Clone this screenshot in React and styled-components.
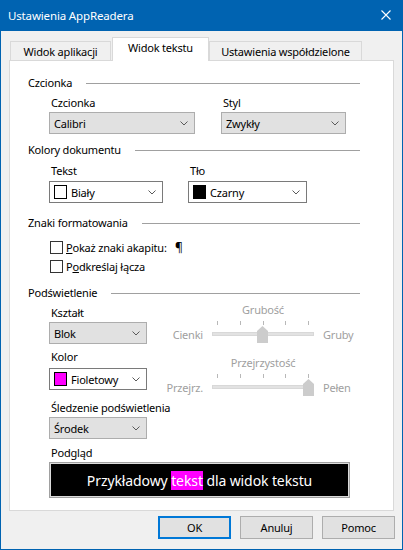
import React from 'react';
import styled, { createGlobalStyle } from 'styled-components';

const Global = createGlobalStyle`
  html, body { margin: 0; padding: 0; background: #f0f0f0; }
  body {
    font-family: "Noto Sans", "Open Sans", sans-serif;
    font-size: 11px;
    letter-spacing: -0.2px;
    color: #000;
  }
  * { box-sizing: border-box; }
`;

const Window = styled.div`
  width: 403px;
  height: 550px;
  border: 1px solid #0063b1;
  border-top: none;
  display: flex;
  flex-direction: column;
  background: #f0f0f0;
`;

const TitleBar = styled.div`
  height: 31px;
  flex: none;
  background: #0063b1;
  color: #fff;
  display: flex;
  align-items: center;
  justify-content: space-between;
  padding: 0 11px 1px 7px;
  font-size: 11.5px;
  letter-spacing: -0.15px;
`;

const Body = styled.div`
  flex: 1;
  display: flex;
  flex-direction: column;
  padding: 6px 8px 0 8px;
`;

const TabRow = styled.div`
  height: 23px;
  display: flex;
  align-items: flex-end;
  padding-left: 1px;
  position: relative;
  z-index: 1;
`;

const Tab = styled.div`
  width: ${p => p.$w}px;
  margin-left: ${p => p.$ml || 0}px;
  height: ${p => (p.$active ? 24 : 19)}px;
  margin-bottom: ${p => (p.$active ? -1 : 0)}px;
  background: ${p => (p.$active ? '#fff' : '#f0f0f0')};
  border: 1px solid #d9d9d9;
  border-bottom: none;
  display: flex;
  align-items: center;
  justify-content: center;
  padding-bottom: ${p => (p.$active ? 4 : 0)}px;
  white-space: nowrap;
`;

const Panel = styled.div`
  height: 451px;
  flex: none;
  background: #fff;
  border: 1px solid #d9d9d9;
  padding: 14px 33px 0 18px;
  display: flex;
  flex-direction: column;
`;

const GroupHeader = styled.div`
  display: flex;
  align-items: center;
  height: 16px;
  line-height: 16px;
  margin-top: ${p => p.$mt || 0}px;
  white-space: nowrap;
`;

const GroupLine = styled.span`
  flex: 1;
  height: 1px;
  background: #a0a0a0;
  margin-left: 14px;
`;

const FieldRow = styled.div`
  display: grid;
  grid-template-columns: ${p => p.$first}px auto;
  padding-left: 21px;
  margin-top: ${p => p.$mt || 0}px;
`;

const Field = styled.div`
  display: flex;
  flex-direction: column;
  align-items: flex-start;
`;

const Label = styled.div`
  height: 16px;
  line-height: 16px;
  white-space: nowrap;
  margin-top: ${p => p.$mt || 0}px;
  margin-left: ${p => p.$ml || 0}px;
  padding-left: 2px;
`;

const ComboBox = styled.div`
  width: ${p => p.$w}px;
  height: 22px;
  flex: none;
  display: flex;
  align-items: center;
  padding: 0 6px 0 4px;
  margin-top: ${p => p.$mt || 0}px;
  background: ${p => (p.$flat ? '#e1e1e1' : '#fff')};
  border: 1px solid ${p => (p.$flat ? '#adadad' : '#7a7a7a')};
`;

const ComboText = styled.span`
  flex: 1;
  white-space: nowrap;
  padding-top: 1px;
`;

const Swatch = styled.span`
  width: 13px;
  height: 14px;
  flex: none;
  border: 1px solid #000;
  background: ${p => p.$c};
  margin-right: 4px;
`;

const Chevron = () => (
  <svg width="8" height="5" viewBox="0 0 8 5" style={{ flex: 'none' }}>
    <path d="M0.5 0.5 L4 4 L7.5 0.5" fill="none" stroke="#5a5a5a" strokeWidth="1" />
  </svg>
);

const Combo = ({ w, flat, mt, swatch, children }) => (
  <ComboBox $w={w} $flat={flat} $mt={mt}>
    {swatch && <Swatch $c={swatch} />}
    <ComboText>{children}</ComboText>
    <Chevron />
  </ComboBox>
);

const CheckRow = styled.label`
  display: flex;
  align-items: center;
  height: 16px;
  margin-left: 22px;
  margin-top: ${p => p.$mt || 0}px;
  white-space: nowrap;
`;

const CheckBox = styled.span`
  width: 13px;
  height: 13px;
  flex: none;
  border: 1px solid #333;
  background: #fff;
  margin-right: 3px;
`;

const CheckText = styled.span`
  width: ${p => (p.$w ? `${p.$w}px` : 'auto')};
`;

const Pilcrow = styled.span`
  font-size: 12px;
`;

const HlRow = styled.div`
  display: flex;
  padding-left: 21px;
`;

const LeftCol = styled.div`
  width: 98px;
  flex: none;
  display: flex;
  flex-direction: column;
`;

const RightCol = styled.div`
  margin-left: 13px;
  display: flex;
  flex-direction: column;
`;

const SliderBlock = styled.div`
  display: grid;
  grid-template-columns: 52px 102px auto;
  grid-template-rows: 16px 37px;
  margin-top: ${p => p.$mt || 0}px;
  color: #a0a0a0;
`;

const SliderTitle = styled.div`
  grid-column: 2;
  grid-row: 1;
  text-align: center;
  line-height: 16px;
  white-space: nowrap;
`;

const SideLabel = styled.div`
  grid-row: 2;
  grid-column: ${p => (p.$left ? 1 : 3)};
  padding-top: 9px;
  line-height: 16px;
  white-space: nowrap;
  text-align: ${p => (p.$left ? 'right' : 'left')};
  padding-right: ${p => (p.$left ? 9 : 0)}px;
  padding-left: ${p => (p.$left ? 0 : 9)}px;
`;

const TrackArea = styled.div`
  grid-row: 2;
  grid-column: 2;
  position: relative;
  padding-top: 3px;
`;

const Ticks = styled.div`
  display: flex;
  justify-content: space-between;
  padding: 0 5px;
  height: 4px;
`;

const Tick = styled.span`
  width: 1px;
  height: 4px;
  background: #b8b8b8;
`;

const Track = styled.div`
  height: 4px;
  margin-top: 7px;
  background: #e2e2e2;
  border: 1px solid #d8d8d8;
`;

const Thumb = styled.svg`
  position: absolute;
  top: 8px;
`;

const Slider = ({ title, left, right, pos, mt }) => {
  const center = 5 + (pos * 91) / 4;
  return (
    <SliderBlock $mt={mt}>
      <SliderTitle>{title}</SliderTitle>
      <SideLabel $left>{left}</SideLabel>
      <TrackArea>
        <Ticks>
          {[0, 1, 2, 3, 4].map(i => <Tick key={i} />)}
        </Ticks>
        <Track />
        <Thumb width="11" height="17" viewBox="0 0 11 17" style={{ left: center - 5.5 }}>
          <path d="M0 5 L5.5 0 L11 5 L11 17 L0 17 Z" fill="#cccccc" />
        </Thumb>
      </TrackArea>
      <SideLabel>{right}</SideLabel>
    </SliderBlock>
  );
};

const Preview = styled.div`
  width: 301px;
  height: 36px;
  margin-left: 21px;
  margin-top: 1px;
  background: #000;
  border: 1px solid #a0a0a0;
  box-shadow: inset 0 0 0 1px #dcdcdc;
  display: flex;
  align-items: center;
  justify-content: center;
  color: #fff;
  font-size: 14px;
  letter-spacing: -0.1px;
  white-space: pre;
`;

const Mark = styled.span`
  background: #ff00ff;
`;

const ButtonRow = styled.div`
  display: flex;
  justify-content: flex-end;
  gap: 9px;
  margin-top: 5px;
  margin-right: -1px;
`;

const Button = styled.div`
  width: 73px;
  height: 23px;
  display: flex;
  align-items: center;
  justify-content: center;
  background: #e1e1e1;
  border: 1px solid ${p => (p.$default ? '#0078d7' : '#adadad')};
  box-shadow: ${p => (p.$default ? 'inset 0 0 0 1px #0078d7' : 'none')};
`;

export default function App() {
  return (
    <>
      <Global />
      <Window>
        <TitleBar>
          <span>Ustawienia AppReadera</span>
          <svg width="10" height="10" viewBox="0 0 10 10">
            <path d="M0.5 0.5 L9.5 9.5 M9.5 0.5 L0.5 9.5" stroke="#fff" strokeWidth="1.1" />
          </svg>
        </TitleBar>
        <Body>
          <TabRow>
            <Tab $w={101}>Widok aplikacji</Tab>
            <Tab $w={97} $ml={1} $active>Widok tekstu</Tab>
            <Tab $w={153}>Ustawienia współdzielone</Tab>
          </TabRow>
          <Panel>
            <GroupHeader>Czcionka<GroupLine /></GroupHeader>
            <FieldRow $first={172} $mt={4}>
              <Field>
                <Label>Czcionka</Label>
                <Combo w={146} flat mt={1}>Calibri</Combo>
              </Field>
              <Field>
                <Label>Styl</Label>
                <Combo w={125} flat mt={1}>Zwykły</Combo>
              </Field>
            </FieldRow>

            <GroupHeader $mt={8}>Kolory dokumentu<GroupLine /></GroupHeader>
            <FieldRow $first={139} $mt={5}>
              <Field>
                <Label>Tekst</Label>
                <Combo w={114} mt={2} swatch="#fff">Biały</Combo>
              </Field>
              <Field>
                <Label>Tło</Label>
                <Combo w={119} mt={2} swatch="#000">Czarny</Combo>
              </Field>
            </FieldRow>

            <GroupHeader $mt={12}>Znaki formatowania<GroupLine /></GroupHeader>
            <CheckRow $mt={8}>
              <CheckBox />
              <CheckText $w={109}><u>P</u>okaż znaki akapitu:</CheckText>
              <Pilcrow>¶</Pilcrow>
            </CheckRow>
            <CheckRow $mt={3}>
              <CheckBox />
              <CheckText>P<u>o</u>dkreślaj łącza</CheckText>
            </CheckRow>

            <GroupHeader $mt={11}>Podświetlenie<GroupLine /></GroupHeader>
            <HlRow>
              <LeftCol>
                <Label $mt={4}>Kształt</Label>
                <Combo w={98} flat mt={1}>Blok</Combo>
                <Label $mt={5}>Kolor</Label>
                <Combo w={98} mt={3} swatch="#ff00ff">Fioletowy</Combo>
                <Label $mt={10}>Śledzenie podświetlenia</Label>
                <Combo w={98} flat mt={1}>Środek</Combo>
              </LeftCol>
              <RightCol>
                <Slider title="Grubość" left="Cienki" right="Gruby" pos={2} mt={1} />
                <Slider title="Przejrzystość" left="Przejrz." right="Pełen" pos={4} mt={0} />
              </RightCol>
            </HlRow>
            <Label $mt={6} $ml={21}>Podgląd</Label>
            <Preview>
              Przykładowy <Mark>tekst</Mark> dla widok tekstu
            </Preview>
          </Panel>
          <ButtonRow>
            <Button $default>OK</Button>
            <Button>Anuluj</Button>
            <Button>Pomoc</Button>
          </ButtonRow>
        </Body>
      </Window>
    </>
  );
}
